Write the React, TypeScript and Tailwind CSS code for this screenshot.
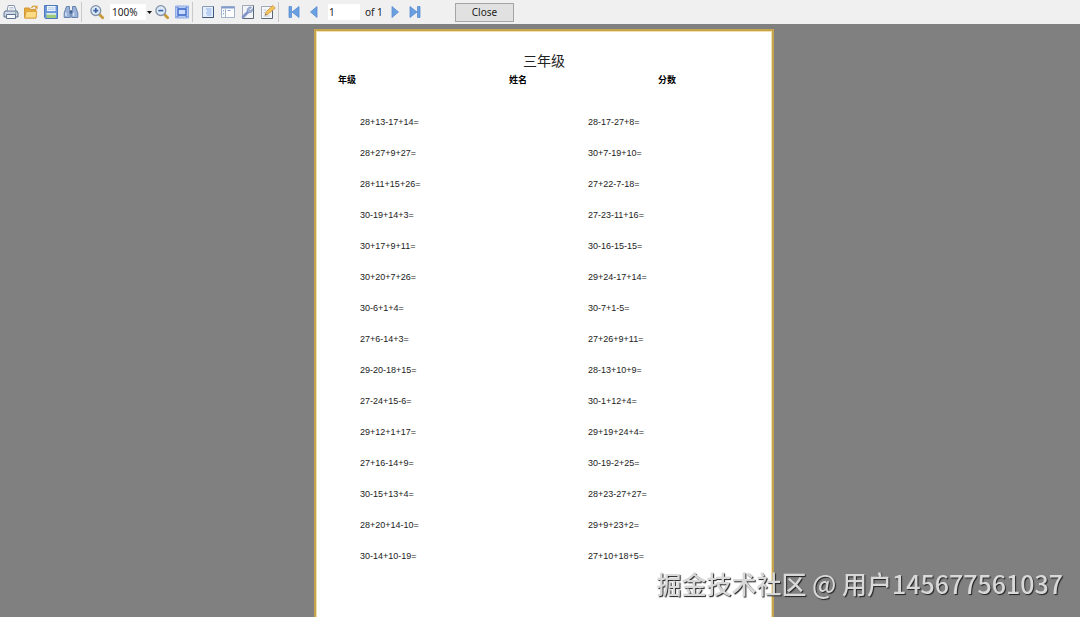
import React from "react";

const problems = [
  ["28+13-17+14=", "28-17-27+8="],
  ["28+27+9+27=", "30+7-19+10="],
  ["28+11+15+26=", "27+22-7-18="],
  ["30-19+14+3=", "27-23-11+16="],
  ["30+17+9+11=", "30-16-15-15="],
  ["30+20+7+26=", "29+24-17+14="],
  ["30-6+1+4=", "30-7+1-5="],
  ["27+6-14+3=", "27+26+9+11="],
  ["29-20-18+15=", "28-13+10+9="],
  ["27-24+15-6=", "30-1+12+4="],
  ["29+12+1+17=", "29+19+24+4="],
  ["27+16-14+9=", "30-19-2+25="],
  ["30-15+13+4=", "28+23-27+27="],
  ["28+20+14-10=", "29+9+23+2="],
  ["30-14+10-19=", "27+10+18+5="],
];

function ToolButton({ label, children }: { label: string; children: React.ReactNode }) {
  return (
    <button
      type="button"
      aria-label={label}
      className="flex h-5 w-5 shrink-0 items-center justify-center hover:bg-[#dbe6f5]"
    >
      <svg viewBox="0 0 16 16" className="h-4 w-4" fill="none">
        {children}
      </svg>
    </button>
  );
}

function Separator() {
  return <div className="mr-[5px] h-5 w-px shrink-0 bg-[#c9c9c9]" />;
}

function Magnifier() {
  return (
    <>
      <path d="M10.5 10.5l3.2 3.2" stroke="#c79a3c" strokeWidth="2.8" strokeLinecap="round" />
      <circle cx="6.8" cy="6.6" r="4.9" fill="#dce9f8" stroke="#8291a8" strokeWidth="1.3" />
    </>
  );
}

export default function App() {
  return (
    <div className="flex h-screen flex-col overflow-hidden bg-[#808080] font-['Noto_Sans','Noto_Sans_CJK_SC',sans-serif] text-[10px] text-[#222]">
      {/* Toolbar */}
      <header className="flex h-6 shrink-0 items-center bg-[#f0f0f0] pl-px">
        <ToolButton label="Print">
          <path d="M4 7l1.2-5.5h6L13 7" fill="#fff" stroke="#8494ab" />
          <path d="M2 7h12l1 2v4H1V9z" fill="#cfd8e6" stroke="#5f7290" />
          <path d="M3.5 10.5h9v4h-9z" fill="#f7faff" stroke="#5f7290" />
          <path d="M6.5 3.5h4M6 5h5" stroke="#a9b8cf" strokeWidth=".8" />
          <path d="M12 9h1.5" stroke="#4d9a50" />
        </ToolButton>
        <ToolButton label="Open">
          <path d="M1.5 4h5l1 1.5h5.5V14H1.5z" fill="#e6a93c" stroke="#d0983a" />
          <path d="M1.8 14L3.2 7.5h10.6L13 14z" fill="#fbdc84" stroke="#dba544" />
          <path d="M8.5 4c1-2 3-2.3 4.8-1.2" stroke="#d9a03c" strokeWidth="1.3" />
          <path d="M11.5 4.5l3.3.2L14.3 1z" fill="#d9a03c" />
        </ToolButton>
        <ToolButton label="Save">
          <path d="M1.5 1.5h13v13h-12l-1-1z" fill="#6c98dc" stroke="#4f79bd" />
          <path d="M4 2h8.5v5H4z" fill="#f2f7ff" />
          <path d="M5 3.8h6.5M5 5.4h6.5" stroke="#a9c1e6" strokeWidth=".8" />
          <path d="M3.5 9h9.5v5H3.5z" fill="#9ccc7c" />
          <path d="M3.5 9h9.5v1.8H3.5z" fill="#d8e8e8" />
        </ToolButton>
        <ToolButton label="Find">
          <path d="M3.5 2.5h3v3l.8 1v7H1.2V9zM12.5 2.5h-3v3l-.8 1v7h6.1V9z" fill="#9bb3d8" stroke="#6782ae" />
          <path d="M6.5 6.5h3v3h-3z" fill="#49658f" />
          <path d="M3 8.5v3.5M10.5 8.5v3.5" stroke="#d6e4f7" strokeWidth="1.4" />
        </ToolButton>
        <Separator />
        <ToolButton label="Zoom in">
          <Magnifier />
          <path d="M4.3 6.6h5M6.8 4.1v5" stroke="#3c62a0" strokeWidth="1.6" />
        </ToolButton>
        <div className="relative ml-[3px] h-4 w-10 shrink-0">
          <select
            aria-label="Zoom level"
            className="block h-4 w-9 appearance-none bg-white pl-0.5 leading-4 outline-none"
            defaultValue="100%"
          >
            <option>100%</option>
            <option>50%</option>
            <option>200%</option>
          </select>
          <svg viewBox="0 0 5 3" className="pointer-events-none absolute top-[7px] -right-0.5 h-[3px] w-[5px]">
            <path d="M0 0h5L2.5 3z" fill="#111" />
          </svg>
        </div>
        <div className="ml-0.5 flex">
          <ToolButton label="Zoom out">
            <Magnifier />
            <path d="M4.3 6.6h5" stroke="#3c62a0" strokeWidth="1.6" />
          </ToolButton>
          <ToolButton label="Full screen">
            <path d="M1.5 2h13v12h-13z" fill="#b5ccf5" stroke="#8fabe4" />
            <path d="M4 5h8v6H4z" fill="#c9dcfb" stroke="#3864c4" strokeWidth="1.3" />
            <path d="M2.5 3.5h2M11.5 3.5h2M2.5 12.5h2M11.5 12.5h2" stroke="#6488d6" />
          </ToolButton>
        </div>
        <Separator />
        <ToolButton label="Outline">
          <path d="M2.5 2.5h11v11h-11z" fill="#e4eefc" stroke="#8a9cb8" />
          <path d="M13.5 2.5v11h-11" stroke="#3f5577" />
          <path d="M6 5h5.5M7 7h4.5M6 9h5.5M7 11h4.5" stroke="#8fb0e8" />
        </ToolButton>
        <ToolButton label="Thumbnails">
          <path d="M1.5 2.5h13v11h-13z" fill="#fdfdfd" stroke="#a3b2c8" />
          <path d="M1.5 3.5h13" stroke="#7f9ccb" strokeWidth="2" />
          <path d="M5.5 5v8.5" stroke="#a7b5ca" />
          <path d="M3.5 6v1.5M3.5 9v1.5M7.5 6.5h3" stroke="#85a8de" />
        </ToolButton>
        <ToolButton label="Page settings">
          <path d="M2.5 1.5h11v13h-11z" fill="#f3f5f8" stroke="#a0a8b5" />
          <path d="M13.5 1.5v13h-11" stroke="#5b6675" />
          <path d="M3 13l5.2-5.2" stroke="#8295c6" strokeWidth="2.8" strokeLinecap="round" />
          <path d="M11.5 3.2L9.2 5.5l1.2 1.3 2.4-2.2c.5 2.4-1.3 4.5-3.4 4.1-2-.3-2.9-2.7-1.7-4.2.8-1.3 2.4-1.8 3.8-1.3z" fill="#a7b7da" stroke="#7489be" strokeWidth=".7" />
        </ToolButton>
        <ToolButton label="Edit page">
          <path d="M1.5 2.5h11v12h-11z" fill="#f7f8fa" stroke="#a0a8b5" />
          <path d="M12.5 5v9.5h-11" stroke="#5b6675" />
          <path d="M3.5 6h3M3.5 8.5h2M3.5 12h6" stroke="#b8c4d5" />
          <path d="M5 11.2l1.2-3.4 6.5-6.3L15.3 4l-7 6z" fill="#f4c35b" stroke="#c9963f" strokeWidth=".8" />
          <path d="M5 11.2l.6-1.5.9.9z" fill="#4b4b4b" />
        </ToolButton>
        <Separator />
        <ToolButton label="First page">
          <path d="M3 2.5h2.5v11H3zM13 2.5v11L6 8z" fill="#69a0e2" stroke="#5a8bd0" strokeWidth=".8" />
        </ToolButton>
        <ToolButton label="Previous page">
          <path d="M11 2.5v11L4.5 8z" fill="#69a0e2" stroke="#5a8bd0" strokeWidth=".8" />
        </ToolButton>
        <input
          aria-label="Page number"
          defaultValue="1"
          className="ml-1 h-4 w-8 shrink-0 bg-white px-px leading-4 outline-none"
        />
        <span className="ml-[5px] w-5 shrink-0 whitespace-nowrap">of 1</span>
        <ToolButton label="Next page">
          <path d="M5 2.5v11L11.5 8z" fill="#69a0e2" stroke="#5a8bd0" strokeWidth=".8" />
        </ToolButton>
        <ToolButton label="Last page">
          <path d="M10.5 2.5H13v11h-2.5zM3 2.5v11L10 8z" fill="#69a0e2" stroke="#5a8bd0" strokeWidth=".8" />
        </ToolButton>
        <button
          type="button"
          className="ml-[30px] h-[19px] w-[59px] shrink-0 border border-[#a3a5a8] bg-[#e1e1e1] leading-4 hover:bg-[#e5f1fb]"
        >
          Close
        </button>
      </header>

      {/* Report page */}
      <main className="flex flex-1 justify-center overflow-hidden pt-[5px] pl-2">
        <article className="h-[650px] w-[460px] shrink-0 border-2 border-[#c6a34f] bg-white px-[22px] pt-5 font-['Liberation_Sans','Noto_Sans_CJK_SC',sans-serif] outline-1 -outline-offset-3 outline-[#f3dfa9]">
          <h1 className="text-center text-[14px] leading-5">三年级</h1>
          <div className="mt-[3px] grid grid-cols-[171px_149px_1fr] text-[9px] leading-3 font-bold text-black">
            <span>年级</span>
            <span>姓名</span>
            <span>分数</span>
          </div>
          <ol className="mt-[21px] pl-[22px] text-[9px]">
            {problems.map(([left, right]) => (
              <li key={left} className="grid h-[31px] grid-cols-[228px_1fr] items-center">
                <span>{left}</span>
                <span>{right}</span>
              </li>
            ))}
          </ol>
        </article>
      </main>

      {/* Watermark */}
      <p className="pointer-events-none fixed right-[17px] bottom-4 font-['Noto_Sans_CJK_SC',sans-serif] text-[25px] leading-9 font-medium whitespace-nowrap text-[#d8d8d8] [text-shadow:1px_1px_1px_#222]">
        掘金技术社区 @ 用户145677561037
      </p>
    </div>
  );
}
